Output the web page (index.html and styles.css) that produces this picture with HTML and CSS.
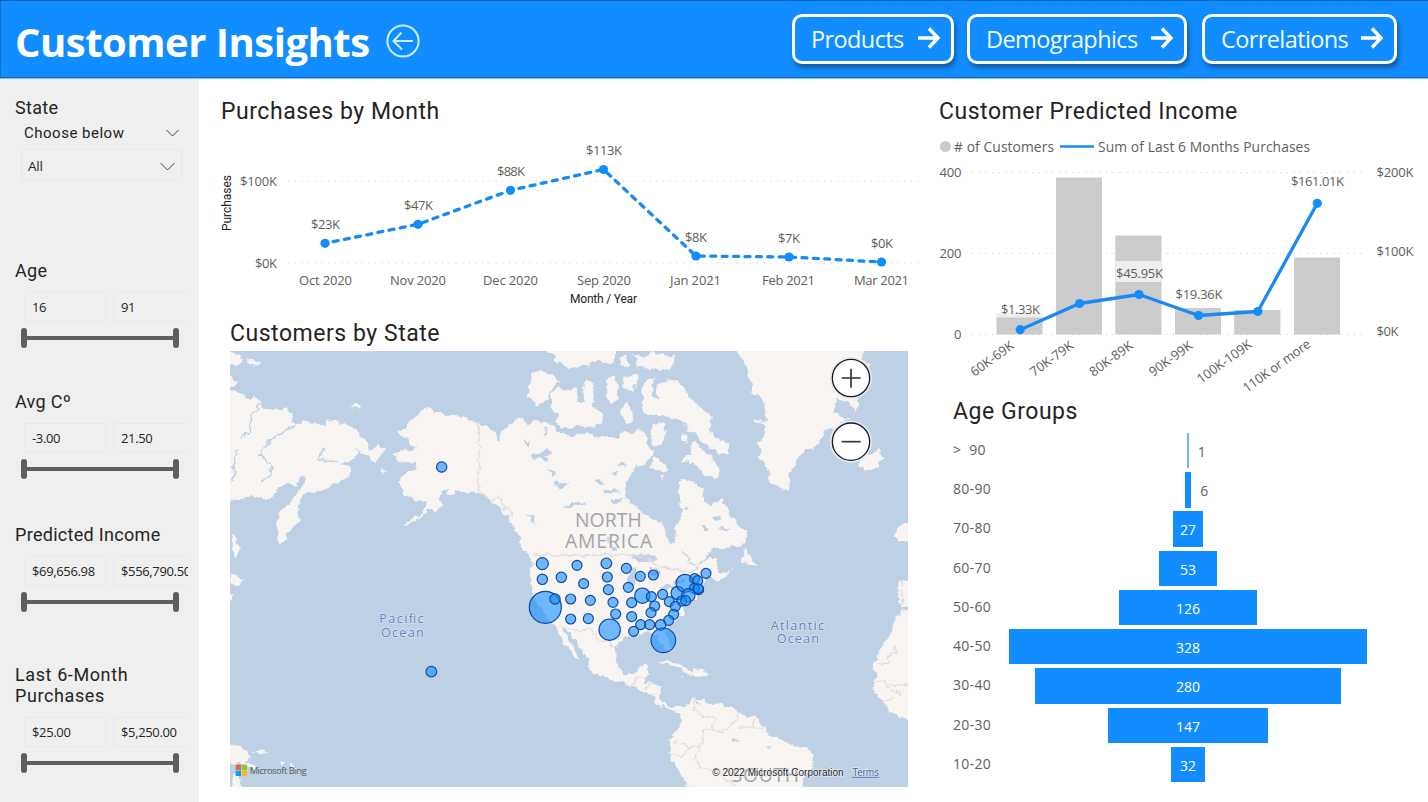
FILE: index.html
```html
<!DOCTYPE html>
<html lang="en">
<head>
<meta charset="utf-8">
<title>Customer Insights</title>
<link rel="stylesheet" href="styles.css">
</head>
<body>
<header class="topbar">
  <h1 class="topbar-title">Customer Insights</h1>
  <svg class="back" width="34" height="34" viewBox="0 0 34 34"><circle cx="17" cy="17" r="15.6"/><path d="M27 17H8M15.5 8.5L7.5 17l8.500 8.500"/></svg>
  <nav class="nav">
    <a class="nav-btn nav-products"><span>Products</span><svg width="24" height="24" viewBox="0 0 24 24"><path d="M1 12H20M12 2.500L21 12l-9 9.500"/></svg></a>
    <a class="nav-btn nav-demo"><span>Demographics</span><svg width="24" height="24" viewBox="0 0 24 24"><path d="M1 12H20M12 2.500L21 12l-9 9.500"/></svg></a>
    <a class="nav-btn nav-corr"><span>Correlations</span><svg width="24" height="24" viewBox="0 0 24 24"><path d="M1 12H20M12 2.500L21 12l-9 9.500"/></svg></a>
  </nav>
</header>
<div class="page">
  <aside class="sidebar">
    <section class="slicer slicer-state">
      <h2 class="slicer-title">State</h2>
      <div class="choose"><span>Choose below</span><svg width="13" height="8" viewBox="0 0 13 8"><path d="M.5 1l6 6 6-6"/></svg></div>
      <div class="dropdown"><span>All</span><svg width="15" height="9" viewBox="0 0 15 9"><path d="M.5 1l7 7 7-7"/></svg></div>
    </section>
    <section class="slicer slicer-age">
      <h2 class="slicer-title">Age</h2>
      <div class="range"><span class="field">16</span><span class="field field-end">91</span></div>
      <div class="slider"><i></i><i></i></div>
    </section>
    <section class="slicer slicer-temp">
      <h2 class="slicer-title">Avg Cº</h2>
      <div class="range"><span class="field">-3.00</span><span class="field field-end">21.50</span></div>
      <div class="slider"><i></i><i></i></div>
    </section>
    <section class="slicer slicer-income">
      <h2 class="slicer-title">Predicted Income</h2>
      <div class="range"><span class="field">$69,656.98</span><span class="field field-end">$556,790.50</span></div>
      <div class="slider"><i></i><i></i></div>
    </section>
    <section class="slicer slicer-last">
      <h2 class="slicer-title">Last 6-Month<br>Purchases</h2>
      <div class="range"><span class="field">$25.00</span><span class="field field-end">$5,250.00</span></div>
      <div class="slider"><i></i><i></i></div>
    </section>
  </aside>
  <main class="center">
    <h2 class="title title-month">Purchases by Month</h2>
    <svg class="chart" width="720" height="190" viewBox="199 128 720 190">
      <path class="grid" d="M288 181H919M288 263H919"/>
      <g class="axis-name"><text transform="translate(231 231) rotate(-90)" textLength="56">Purchases</text><text x="570" y="303" textLength="67">Month / Year</text></g>
      <g class="lbl">
        <text x="240" y="185.500" textLength="37">$100K</text><text x="255" y="267.500" textLength="22">$0K</text>
        <text x="299" y="285" textLength="53">Oct 2020</text><text x="390" y="285" textLength="56">Nov 2020</text><text x="483" y="285" textLength="55">Dec 2020</text><text x="577" y="285" textLength="54">Sep 2020</text><text x="670" y="285" textLength="51">Jan 2021</text><text x="762" y="285" textLength="53">Feb 2021</text><text x="854" y="285" textLength="55">Mar 2021</text>
        <text x="311" y="229" textLength="29">$23K</text><text x="404" y="210" textLength="29">$47K</text><text x="497" y="176" textLength="28">$88K</text><text x="586" y="155" textLength="36">$113K</text><text x="685" y="242" textLength="22">$8K</text><text x="778" y="243" textLength="22">$7K</text><text x="871" y="248" textLength="22">$0K</text>
      </g>
      <path class="series dashed" d="M325 243.300L418 224.300L510.500 190.300L603.500 169.500L696 256L789 257L881.500 262"/>
      <g class="dots"><circle cx="325" cy="243.300" r="4.600"/><circle cx="418" cy="224.300" r="4.600"/><circle cx="510.500" cy="190.300" r="4.600"/><circle cx="603.500" cy="169.500" r="4.600"/><circle cx="696" cy="256" r="4.600"/><circle cx="789" cy="257" r="4.600"/><circle cx="881.500" cy="262" r="4.600"/></g>
    </svg>
    <h2 class="title title-map">Customers by State</h2>
    <div class="map">
      <svg class="map-canvas" width="678" height="436" viewBox="15 18 2034 1308">
        <defs><filter id="coast" x="-40" y="-40" width="2180" height="1460" filterUnits="userSpaceOnUse"><feTurbulence type="fractalNoise" baseFrequency=".045" numOctaves="3" seed="4"/><feDisplacementMap in="SourceGraphic" scale="22" xChannelSelector="R" yChannelSelector="G"/></filter></defs>
        <g class="land" filter="url(#coast)">
          <path d="M-15 125L30 142 55 150 70 165 85 148 95 165 120 190 145 195 165 190 190 195 200 220 212 235 235 228 260 236 275 232 300 250 300 222 330 225 370 240 400 262 430 292 436 320 455 300 480 315 465 330 450 353 435 335 415 325 395 312 388 345 350 352 345 360 378 365 378 392 360 405 330 415 295 438 265 440 232 447 225 470 218 500 222 530 205 545 190 565 175 595 165 600 160 575 155 530 165 500 190 480 215 450 235 420 243 400 225 398 215 425 190 412 160 425 140 462 110 462 85 457 40 462-15 475Z"/>
          <path d="M375 185L392 173 410 183 400 193ZM-5 15L50 30 48 50 30 58-5 60ZM65 42L100 48 105 60 85 65ZM-5 95L38 112 30 122-5 115ZM465 374L494 382 480 388ZM22 565L35 572 34 600 46 605 36 640 25 635ZM20 685L35 695 56 707 40 718 25 724 16 710ZM5 745L22 750 20 765 5 770ZM-5 1195L45 1203 70 1220 76 1240 62 1247 90 1262 95 1275 70 1265 50 1252 35 1257-5 1250ZM25 1285L38 1290 45 1305 58 1340 18 1340ZM85 1222L120 1215 130 1220 100 1228ZM160 1243L180 1252 175 1257ZM190 1255L212 1268 205 1271Z"/>
          <path d="M515 262L545 250 555 228 580 212 582 200 610 188 630 200 665 208 690 212 720 220 760 235 790 245 810 262 820 290 828 260 850 245 870 225 895 215 910 235 935 228 960 230 990 248 1010 265 1050 275 1080 260 1120 275 1150 270 1185 280 1195 255 1220 270 1235 245 1260 262 1265 290 1280 310 1282 330 1265 350 1235 365 1215 390 1200 430 1205 460 1225 480 1245 495 1280 520 1310 530 1320 550 1322 575 1338 598 1350 590 1352 560 1348 545 1370 520 1372 500 1360 470 1365 450 1365 410 1380 403 1410 410 1420 425 1438 440 1440 470 1460 478 1480 470 1490 455 1505 480 1515 510 1540 540 1567 560 1568 585 1550 600 1510 608 1470 610 1450 625 1425 660 1455 632 1475 645 1473 670 1490 685 1510 680 1530 663 1505 690 1480 707 1460 697 1440 705 1425 720 1435 730 1420 740 1415 760 1385 775 1365 787 1380 800 1375 810 1355 825 1330 840 1320 855 1325 875 1340 905 1335 920 1320 915 1305 890 1295 870 1265 860 1245 867 1240 875 1210 870 1185 885 1172 910 1172 945 1185 975 1200 990 1225 990 1235 965 1270 960 1272 970 1260 995 1260 1015 1290 1015 1308 1023 1305 1045 1302 1060 1320 1080 1340 1090 1360 1080 1372 1092 1368 1103 1340 1097 1320 1092 1295 1075 1285 1060 1270 1045 1235 1030 1220 1023 1195 1015 1170 1007 1140 1000 1105 985 1095 970 1095 955 1080 930 1065 910 1050 885 1030 860 1012 850 1035 885 1050 910 1060 942 1045 932 1020 900 1002 865 985 838 965 815 935 775 918 740 920 705 915 675 918 645 905 620 885 600 890 575 870 560 865 535 850 520 830 490 800 470 775 445 750 445 715 440 690 432 690 447 660 450 672 430 660 430 650 450 640 462 650 480 635 500 620 490 600 505 575 522 540 544 535 540 575 515 600 490 610 478 590 468 565 470 560 455 535 445 525 425 520 410 535 390 550 380 568 375 570 352 540 355 520 345 505 328 530 312 560 318 575 312 555 300 545 285 520 270Z"/>
          <path d="M918 85L950 75 975 85 1003 108 985 125 970 150 955 175 930 183 922 160 905 155 915 120ZM975 150L1000 120 1020 135 1055 130 1060 170 1078 172 1073 115 1095 100 1105 125 1105 180 1135 215 1130 235 1100 250 1070 240 1040 252 1010 245 990 235 1000 210 985 200ZM955 15L990 35 985 50 1010 55 1035 74 1060 60 1090 65 1120 45 1135 60 1160 55 1170 30 1170 5 955 5ZM1185 40L1200 33 1212 65 1190 65ZM1225 25L1260 35 1285 22 1345 35 1342 70 1300 72 1260 70 1235 60ZM1140 105L1170 95 1180 125 1180 160 1160 182 1145 150ZM1192 92L1240 90 1235 120 1220 138 1200 135ZM1205 165L1220 190 1225 225 1210 235 1185 215 1195 185Z"/>
          <path d="M1255 110L1290 98 1282 125 1285 160 1305 160 1292 140 1305 115 1350 102 1375 125 1400 165 1435 195 1460 215 1460 240 1450 255 1485 285 1515 300 1505 325 1480 325 1460 310 1430 290 1410 265 1385 250 1370 230 1340 215 1315 210 1300 217 1260 205 1250 175ZM1410 290L1430 315 1460 330 1480 370 1482 400 1455 398 1425 375 1405 355 1365 350 1380 335 1400 325 1395 300ZM1285 335L1310 350 1328 375 1300 380 1278 365ZM1370 268L1390 270 1385 290 1368 285ZM1280 235L1315 235 1325 270 1310 300 1290 305 1275 275ZM1305 395L1318 392 1314 403ZM1545 642L1565 612 1580 640 1600 660 1575 656Z"/>
          <path d="M1530 5L1565 65 1567 95 1580 110 1582 145 1610 155 1622 200 1625 225 1610 235 1588 215 1590 232 1622 240 1620 265 1600 290 1610 320 1600 335 1620 355 1630 385 1635 415 1660 425 1685 438 1698 410 1695 385 1715 355 1720 330 1760 310 1785 290 1795 262 1825 250 1850 235 1870 222 1825 205 1835 165 1870 168 1892 205 1900 180 1890 150 1920 110 1935 60 1910 45 1915 5ZM1900 345L1925 330 1960 312 1975 340 1960 365 1925 378 1897 362 1910 350ZM2010 555L2030 540 2075 525 2075 585 2025 592 2010 580Z"/>
          <path d="M1292 955L1325 942 1365 960 1410 988 1395 990 1370 975 1330 957ZM1393 984L1420 973 1452 986 1420 993ZM1366 992L1375 990 1372 995ZM1462 990L1476 991 1470 994ZM2020 710L2080 705 2080 785 2025 790 2020 755ZM2030 797L2080 792 2080 1128 2025 1120 1990 1095 1975 1065 1950 1045 1940 1025 1955 995 1945 955 1965 915 1995 870 2005 835Z"/>
          <path d="M1365 1095L1405 1060 1420 1065 1470 1075 1520 1085 1540 1105 1590 1120 1620 1145 1630 1170 1670 1185 1720 1205 1755 1215 1770 1240 1760 1270 1735 1290 1732 1355 1405 1355 1390 1326 1365 1285 1340 1245 1332 1225 1340 1205 1332 1190 1345 1165 1360 1155 1368 1135Z"/>
        </g>
        <g class="lake" filter="url(#coast)">
          <path d="M900 285l14 8-4 16-10-12zM920 328l50-12 12 10-24 8 18 14-34-4-14 4zM970 372l22 8-8 14zM985 405l20 10 30 0-22 12-22-4zM905 505l20 15 6 20-12-14zM1108 408l26-4 10 12-22 4zM1150 385l30-8-12 18zM1128 438l36-8 22 10-30 6zM1180 360l14-10 12 12-20 6zM1100 470l-66 6-20 14 40-8zM1145 575l14 0 12 44-14-8zM1160 465l44-6-34 14zM1435 540l14 0 0 16-12 4zM1480 548l36 4-20 8zM1375 495l20-12-14 18zM1465 520l20-6-10 14z"/>
          <path d="M1218 640l35-14 46 14-26 12-34-2zM1208 705l14-38 12 4-8 52-14-6zM1275 660l28 22-10 20-22-26zM1298 732l34-14 14 4-34 16zM1345 708l30-6 4 8-26 6zM1520 1178l24 4-14 6zM1625 1205l16 6-12 4zM1418 1065l8 14-10-2z"/>
        </g>
        <g class="river" filter="url(#coast)"><path d="M105 180L80 210 78 250 50 280M212 240L160 270 130 290 105 325 140 360 130 395 108 405M38 310L30 350 22 405M300 305L278 345 340 350M1372 620L1410 668 1460 630M962 245V275"/></g>
        <g class="border" filter="url(#coast)">
          <path d="M760 235L762 440 800 470 820 455 845 490 862 520M930 630H1185L1265 640 1300 665 1400 680 1440 640M1005 838L1040 855 1090 855 1110 870 1130 890 1150 885 1170 915M1220 1020L1235 995 1260 1000M1255 1030L1290 1015M1280 1050L1305 1045M1410 1065L1405 1095 1440 1115 1470 1120 1465 1155 1490 1160 1530 1130 1540 1105M1465 1155L1435 1150 1430 1200 1395 1210 1375 1195 1345 1190M1395 1210L1370 1235 1345 1230M1430 1200L1405 1240 1430 1270 1480 1275 1530 1326M1590 1120L1580 1148 1540 1150M1620 1145L1605 1150 1580 1148M1960 955H1990V930H2010V900M1945 1015L1980 1010 1995 1040 2030 1045M1980 1070L2010 1055M1995 1020H2060M2030 710V780"/>
        </g>
        <g class="place"><text x="1050" y="545" textLength="200">NORTH</text><text x="1020" y="609" textLength="262">AMERICA</text><text x="1520" y="1311" textLength="202">SOUTH</text></g>
        <g class="ocean"><text x="463" y="835" textLength="133">Pacific</text><text x="468" y="875" textLength="128">Ocean</text><text x="1637" y="855" textLength="160">Atlantic</text><text x="1655" y="894" textLength="127">Ocean</text></g>
        <g class="bubbles">
          <circle cx="650" cy="366" r="15.500"/><circle cx="952" cy="656" r="18"/><circle cx="952" cy="703" r="15.500"/><circle cx="1009" cy="697" r="15.500"/><circle cx="961" cy="787" r="48"/><circle cx="990" cy="762" r="15.500"/><circle cx="619" cy="980" r="16"/>
          <g transform="translate(1020 645)"><circle cx="36" cy="16" r="15"/><circle cx="124" cy="10" r="16"/><circle cx="184" cy="25" r="15"/><circle cx="127" cy="51" r="15"/><circle cx="226" cy="49" r="15"/><circle cx="265" cy="45" r="15"/><circle cx="56" cy="71" r="15"/><circle cx="130" cy="89" r="15"/><circle cx="190" cy="82" r="15"/><circle cx="17" cy="117" r="15"/><circle cx="76" cy="121" r="15"/><circle cx="144" cy="127" r="15"/><circle cx="200" cy="128" r="15"/><circle cx="232" cy="107" r="23"/><circle cx="259" cy="110" r="15"/><circle cx="293" cy="103" r="15"/><circle cx="338" cy="99" r="20"/><circle cx="360" cy="70" r="27"/><circle cx="389" cy="56" r="15"/><circle cx="398" cy="62" r="15"/><circle cx="423" cy="40" r="15"/><circle cx="400" cy="88" r="16"/><circle cx="388" cy="85" r="15"/><circle cx="400" cy="86" r="14"/><circle cx="370" cy="106" r="20"/><circle cx="350" cy="123" r="15"/><circle cx="362" cy="122" r="15"/><circle cx="313" cy="125" r="15"/><circle cx="331" cy="139" r="15"/><circle cx="269" cy="138" r="15"/><circle cx="258" cy="158" r="15"/><circle cx="152" cy="162" r="15"/><circle cx="200" cy="170" r="15"/><circle cx="326" cy="163" r="15"/><circle cx="311" cy="181" r="15"/><circle cx="287" cy="195" r="16"/><circle cx="17" cy="177" r="15"/><circle cx="70" cy="176" r="15"/><circle cx="227" cy="194" r="15"/><circle cx="254" cy="194" r="15"/><circle cx="206" cy="214" r="15"/><circle cx="134" cy="209" r="32"/><circle cx="295" cy="241" r="37"/></g>
        </g>
        <g class="zoom"><circle class="halo" cx="1878" cy="99" r="60"/><circle class="btn" cx="1878" cy="99" r="56"/><path d="M1850 99h57M1878 71v57"/><circle class="halo" cx="1878" cy="290" r="60"/><circle class="btn" cx="1878" cy="290" r="56"/><path d="M1850 290h57"/></g>
        <g><path fill="#e8653a" d="M32 1259h16v16H32z"/><path fill="#8cc63f" d="M50 1259h16v16H50z"/><path fill="#00a4ef" d="M32 1277h16v16H32z"/><path fill="#ffb900" d="M50 1277h16v16H50z"/></g>
        <g class="credit"><text class="bing" x="74" y="1286" textLength="171">Microsoft Bing</text><text x="1462" y="1292" textLength="394">© 2022 Microsoft Corporation</text><text class="terms" x="1882" y="1292" textLength="80">Terms</text><path d="M1882 1297h80"/></g>
      </svg>
    </div>
  </main>
  <section class="right">
    <h2 class="title title-income">Customer Predicted Income</h2>
    <svg class="chart" width="489" height="264" viewBox="939 134 489 264">
      <circle cx="945.500" cy="146.500" r="5.500" fill="#ccc"/><path class="series thin" d="M1060 146.500H1094"/>
      <g class="lbl legend"><text x="954" y="151.500" textLength="100">#&#160;of&#160;Customers</text><text x="1098" y="151.500" textLength="212">Sum of Last 6 Months Purchases</text></g>
      <path class="grid" d="M972 172.500H1364M972 253.500H1364M972 334.500H1364"/>
      <g fill="#ccc"><path d="M996.500 317h46v17.500h-46zM1056 177.500h46V334.500h-46zM1115.300 235.500h46.200V334.500h-46.200zM1175 308h46V334.500h-46zM1234.200 310h46.200V334.500h-46.200zM1294 257.500h46V334.500h-46z"/></g>
      <path fill="#efefef" d="M1115.300 261h46.200v21h-46.200zM996.500 313h46v4.500h-46z"/>
      <path class="series" d="M1020.200 329.700L1079.500 303.500L1139 294.500L1198.500 315.500L1257.800 311.500L1317.300 203.300"/>
      <g class="dots"><circle cx="1020.200" cy="329.700" r="4.600"/><circle cx="1079.500" cy="303.500" r="4.600"/><circle cx="1139" cy="294.500" r="4.600"/><circle cx="1198.500" cy="315.500" r="4.600"/><circle cx="1257.800" cy="311.500" r="4.600"/><circle cx="1317.300" cy="203.300" r="4.600"/></g>
      <g class="lbl"><text x="939.500" y="177" textLength="22">400</text><text x="939.500" y="258" textLength="22">200</text><text x="954" y="339">0</text><text x="1376.500" y="177" textLength="37">$200K</text><text x="1376.500" y="256" textLength="37">$100K</text><text x="1376.500" y="335.500" textLength="22">$0K</text>
        <text x="1001" y="313.500" textLength="39">$1.33K</text><text x="1116" y="278" textLength="47">$45.95K</text><text x="1175.500" y="299" textLength="47">$19.36K</text><text x="1291" y="186" textLength="53">$161.01K</text>
        <text transform="translate(974.500 377) rotate(-36)" textLength="50">60K-69K</text><text transform="translate(1034 377) rotate(-36)" textLength="50">70K-79K</text><text transform="translate(1093.500 377) rotate(-36)" textLength="50">80K-89K</text><text transform="translate(1153 377) rotate(-36)" textLength="50">90K-99K</text><text transform="translate(1201 384) rotate(-36)" textLength="64">100K-109K</text><text transform="translate(1247 393) rotate(-36)" textLength="80">110K or more</text></g>
    </svg>
    <h2 class="title title-age">Age Groups</h2>
    <div class="funnel">
      <div class="row"><span class="band">&gt;&#160; 90</span><div class="lane"><b class="bar sliver" style="width:1.500px"></b><span class="out">1</span></div></div>
      <div class="row"><span class="band">80-90</span><div class="lane"><b class="bar" style="width:6.600px"></b><span class="out">6</span></div></div>
      <div class="row"><span class="band">70-80</span><div class="lane"><b class="bar" style="width:29.500px">27</b></div></div>
      <div class="row"><span class="band">60-70</span><div class="lane"><b class="bar" style="width:57.800px">53</b></div></div>
      <div class="row"><span class="band">50-60</span><div class="lane"><b class="bar" style="width:137.300px">126</b></div></div>
      <div class="row"><span class="band">40-50</span><div class="lane"><b class="bar" style="width:357.500px">328</b></div></div>
      <div class="row"><span class="band">30-40</span><div class="lane"><b class="bar" style="width:305.200px">280</b></div></div>
      <div class="row"><span class="band">20-30</span><div class="lane"><b class="bar" style="width:160.200px">147</b></div></div>
      <div class="row"><span class="band">10-20</span><div class="lane"><b class="bar" style="width:34.900px">32</b></div></div>
    </div>
  </section>
</div>
</body>
</html>
```
FILE: styles.css
```css
* { box-sizing: border-box; }
body { margin: 0; width: 1428px; height: 802px; overflow: hidden; background: #fff; color: #252423; font-family: "Open Sans", "Noto Sans", sans-serif; }
h1, h2 { margin: 0; font-weight: 400; }
svg { display: block; flex: none; }

.topbar { display: flex; align-items: center; height: 79px; padding: 0 31px 0 15px; background: #118dff; border-top: 1px solid #0b65b7; border-bottom: 1px solid #86c3fb; box-shadow: inset 0 -1px #1268b8, inset 1px 0 #0f70cb; }
.topbar-title { width: 371px; color: #fff; font-size: 40px; font-weight: 700; line-height: 78px; letter-spacing: -.5px; white-space: nowrap; padding-top: 5px; }
.back { fill: none; stroke: #c9f0ff; stroke-width: 2; margin-top: 3px; }
.nav { display: flex; margin-left: auto; }
.nav-btn { display: flex; align-items: center; height: 50px; padding: 0 10px 0 16px; border: 3px solid #fff; border-radius: 10px; box-shadow: 2px 4px 4px rgba(20, 60, 110, .6); color: #f2fbff; font-size: 23.500px; letter-spacing: -.6px; margin-top: -2px; white-space: nowrap; }
.nav-btn svg { margin-left: auto; fill: none; stroke: #fff; stroke-width: 3.400; margin-top: -1px; }
.nav-products { width: 162px; margin-right: 13px; }
.nav-demo { width: 220px; margin-right: 15px; }
.nav-corr { width: 195px; }

.page { display: flex; height: 723px; }
.sidebar { width: 199px; background: #efefef; padding-left: 15px; }
.slicer-state { height: 181px; padding-top: 18px; }
.slicer-age { height: 131px; }
.slicer-temp { height: 133px; }
.slicer-income { height: 140px; }
.slicer-title { font-family: Roboto, sans-serif; font-size: 18px; line-height: 21px; letter-spacing: .3px; }
.slicer-last .slicer-title { letter-spacing: .6px; }
.choose { display: flex; align-items: center; justify-content: space-between; height: 20px; margin: 5px 20px 0 9px; font: 15px/20px Roboto, sans-serif; letter-spacing: .5px; }
.choose svg, .dropdown svg { fill: none; stroke: #444; stroke-width: 1; }
.dropdown { display: flex; align-items: center; justify-content: space-between; width: 161px; height: 32px; margin: 6px 0 0 6px; padding: 2px 6px 0; border: 1px solid #e8e8e8; font-size: 13.500px; letter-spacing: -.2px; }
.range { display: flex; gap: 7px; width: 173px; margin-top: 11px; padding-left: 9px; overflow: hidden; }
.field { flex: none; width: 82px; height: 30px; padding: 0 7px; border: 1px solid #e9e9e9; font-size: 13px; line-height: 28px; letter-spacing: -.35px; white-space: nowrap; }
.field-end { width: 90px; }
.slider { display: flex; justify-content: space-between; width: 158px; height: 20px; margin: 6px 0 0 6px; background: linear-gradient(#605e5c, #605e5c) center / 150px 4px no-repeat; }
.slider i { width: 6px; border-radius: 3px; background: #605e5c; }

.center { width: 720px; }
.title { font-family: Roboto, sans-serif; font-size: 23px; line-height: 28px; letter-spacing: .53px; white-space: nowrap; }
.title-month { padding: 19px 0 0 22px; height: 49px; }
.title-map { padding: 2px 0 0 31px; height: 33px; }
.map { margin-left: 31px; width: 678px; height: 436px; background: #bdd0e4; }
.chart { overflow: visible; }
.grid { stroke: #c8c8c8; stroke-width: 1; stroke-dasharray: 1 5.700; fill: none; }
.lbl { font-size: 13px; fill: #605e5c; }
.legend { font-size: 13.800px; }
.axis-name { font: 12px Roboto, sans-serif; fill: #252423; }
.series { fill: none; stroke: #1a89f2; stroke-width: 3.300; stroke-linejoin: round; }
.thin { stroke-width: 2.500; }
.dashed { stroke-dasharray: 5 6.400; stroke-linecap: round; stroke-dashoffset: 3; }
.dots { fill: #118dff; }

.land { fill: #f7f4f2; }
.lake { fill: #bdd0e4; }
.river { fill: none; stroke: #bdd0e4; stroke-width: 5; }
.border { fill: none; stroke: #e2dcda; stroke-width: 4; }
.place { font-size: 58px; fill: #a3a5ab; stroke: #f7f4f2; stroke-width: 4; paint-order: stroke; }
.ocean { font-size: 38px; fill: #6a7fc0; stroke: #d6e2f0; stroke-width: 5; paint-order: stroke; }
.bubbles { fill: #118dff; fill-opacity: .6; stroke: #10499f; stroke-width: 3.500; }
.zoom { fill: none; stroke: #333; stroke-width: 5; }
.zoom .halo { stroke: #e4ebf3; stroke-width: 6; }
.zoom .btn { fill: #fff; stroke: #1b1b1b; stroke-width: 4; }
.credit { font: 30px "Liberation Sans", sans-serif; fill: #222; stroke: #f2f4f6; stroke-width: 3; paint-order: stroke; }
.credit .bing { font: 28px "Open Sans", sans-serif; fill: #55585c; stroke: none; }
.credit .terms { fill: #4a60a8; }
.credit path { stroke: #6478b8; stroke-width: 3; }

.right { width: 509px; padding-left: 20px; }
.title-income { padding-top: 19px; height: 55px; }
.title-age { padding-left: 14px; height: 35px; }
.funnel { display: grid; grid-auto-rows: 35.300px; row-gap: 3.950px; padding-left: 14px; }
.row { display: grid; grid-template-columns: 55px 360px; grid-template-rows: 35.300px; }
.band { font-size: 14px; line-height: 34px; color: #605e5c; letter-spacing: .3px; }
.lane { display: grid; grid-template-columns: 1fr auto 1fr; grid-template-rows: 35.300px; }
.bar { grid-column: 2; background: #118dff; color: #fff; font-weight: 400; font-size: 14px; line-height: 35px; padding-top: 1px; height: 35.300px; text-align: center; white-space: nowrap; }
.sliver { background: #71b5f3; }
.out { grid-column: 3; padding-left: 9px; font-size: 14px; line-height: 38px; color: #605e5c; }
```
